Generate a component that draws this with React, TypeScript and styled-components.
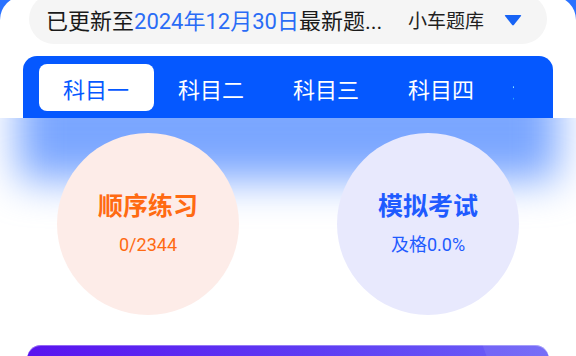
import React from 'react'
import styled, { createGlobalStyle } from 'styled-components'

const GlobalStyle = createGlobalStyle`
  html, body { margin: 0; padding: 0; }
  body {
    width: 576px; height: 356px; overflow: hidden;
    background: #2a72ff;
    font-family: Roboto, "Noto Sans CJK SC", "Noto Sans", sans-serif;
  }
`

const Panel = styled.div`
  margin-top: -4px;
  height: 360px;
  background: #fff;
  border-radius: 24px 24px 0 0;
  overflow: hidden;
  display: flex; flex-direction: column;
`

const SearchBar = styled.div`
  margin: -2px 29px 0;
  height: 50px;
  border-radius: 25px;
  background: #f5f5f5;
  display: flex; align-items: center;
  padding: 0 25px 0 17px;
`

const Notice = styled.div`
  font-size: 22px; color: #1a1a1a; white-space: nowrap;
`

const Hl = styled.span`
  color: #2a6cf6;
`

const Library = styled.span`
  margin-left: auto;
  font-size: 19px; color: #1f1f1f;
`

const Caret = styled.svg`
  margin-left: 20px; margin-top: 2px;
  width: 18px; height: 12px;
`

const TabCard = styled.div`
  margin: 12px 23px 0;
  height: 62px;
  box-sizing: border-box;
  padding: 8px 15px 7px 15.5px;
  background: #0558ff;
  border-radius: 14px 14px 0 0;
`

const TabStrip = styled.div`
  width: 475px; height: 47px;
  display: flex; overflow: hidden;
`

const Tab = styled.div<{ $active?: boolean }>`
  flex: 0 0 115px; height: 47px;
  display: flex; align-items: center; justify-content: center;
  border-radius: 8px;
  font-size: 22px; white-space: nowrap;
  background: ${p => (p.$active ? '#fff' : 'transparent')};
  color: ${p => (p.$active ? '#0558ff' : '#fff')};
`

const Content = styled.div`
  position: relative;
  flex: 1;
  overflow: hidden;
  &::before {
    content: '';
    position: absolute;
    left: 18px; right: 18px; top: -40px; height: 102px;
    background: #7aa6ff;
    filter: blur(20px);
  }
`

const CircleRow = styled.div`
  position: relative; z-index: 1;
  display: flex; justify-content: space-between;
  padding: 15px 57px 0;
`

const Circle = styled.div<{ $bg: string; $fg: string }>`
  width: 182px; height: 182px; border-radius: 50%;
  background: ${p => p.$bg};
  color: ${p => p.$fg};
  display: flex; flex-direction: column; align-items: center; justify-content: center;
`

const Title = styled.div`
  font-size: 25px; font-weight: 700; line-height: 30px;
`

const Sub = styled.div`
  margin-top: 12px;
  font-size: 18px; line-height: 22px;
`

const Banner = styled.div`
  position: relative; z-index: 1;
  margin: 30px 27px 0;
  height: 80px;
  border-radius: 14px;
  background: linear-gradient(90deg, #5913ef 0%, #5e3cf3 55%, #6c62f7 100%);
  box-shadow: inset 0 1px 0 rgba(255, 255, 255, 0.35);
  overflow: hidden;
  &::after {
    content: '';
    position: absolute; right: -30px; top: -20px;
    width: 90px; height: 60px;
    background: rgba(255, 255, 255, 0.08);
    transform: rotate(-20deg);
  }
`

const tabs = ['科目一', '科目二', '科目三', '科目四', '满分学习']

export default function App() {
  return (
    <>
      <GlobalStyle />
      <Panel>
        <SearchBar>
          <Notice>
            已更新至<Hl>2024年12月30日</Hl>最新题...
          </Notice>
          <Library>小车题库</Library>
          <Caret viewBox="0 0 18 12">
            <path d="M1.5 1 H16.5 Q17.6 1 17 2 L9.8 11 Q9 11.8 8.2 11 L1 2 Q0.4 1 1.5 1 Z" fill="#1763f5" />
          </Caret>
        </SearchBar>
        <TabCard>
          <TabStrip>
            {tabs.map((t, i) => (
              <Tab key={t} $active={i === 0}>{t}</Tab>
            ))}
          </TabStrip>
        </TabCard>
        <Content>
          <CircleRow>
            <Circle $bg="#fdece8" $fg="#ff6a12">
              <Title>顺序练习</Title>
              <Sub>0/2344</Sub>
            </Circle>
            <Circle $bg="#e8e9fd" $fg="#1f5bff">
              <Title>模拟考试</Title>
              <Sub>及格0.0%</Sub>
            </Circle>
          </CircleRow>
          <Banner />
        </Content>
      </Panel>
    </>
  )
}
